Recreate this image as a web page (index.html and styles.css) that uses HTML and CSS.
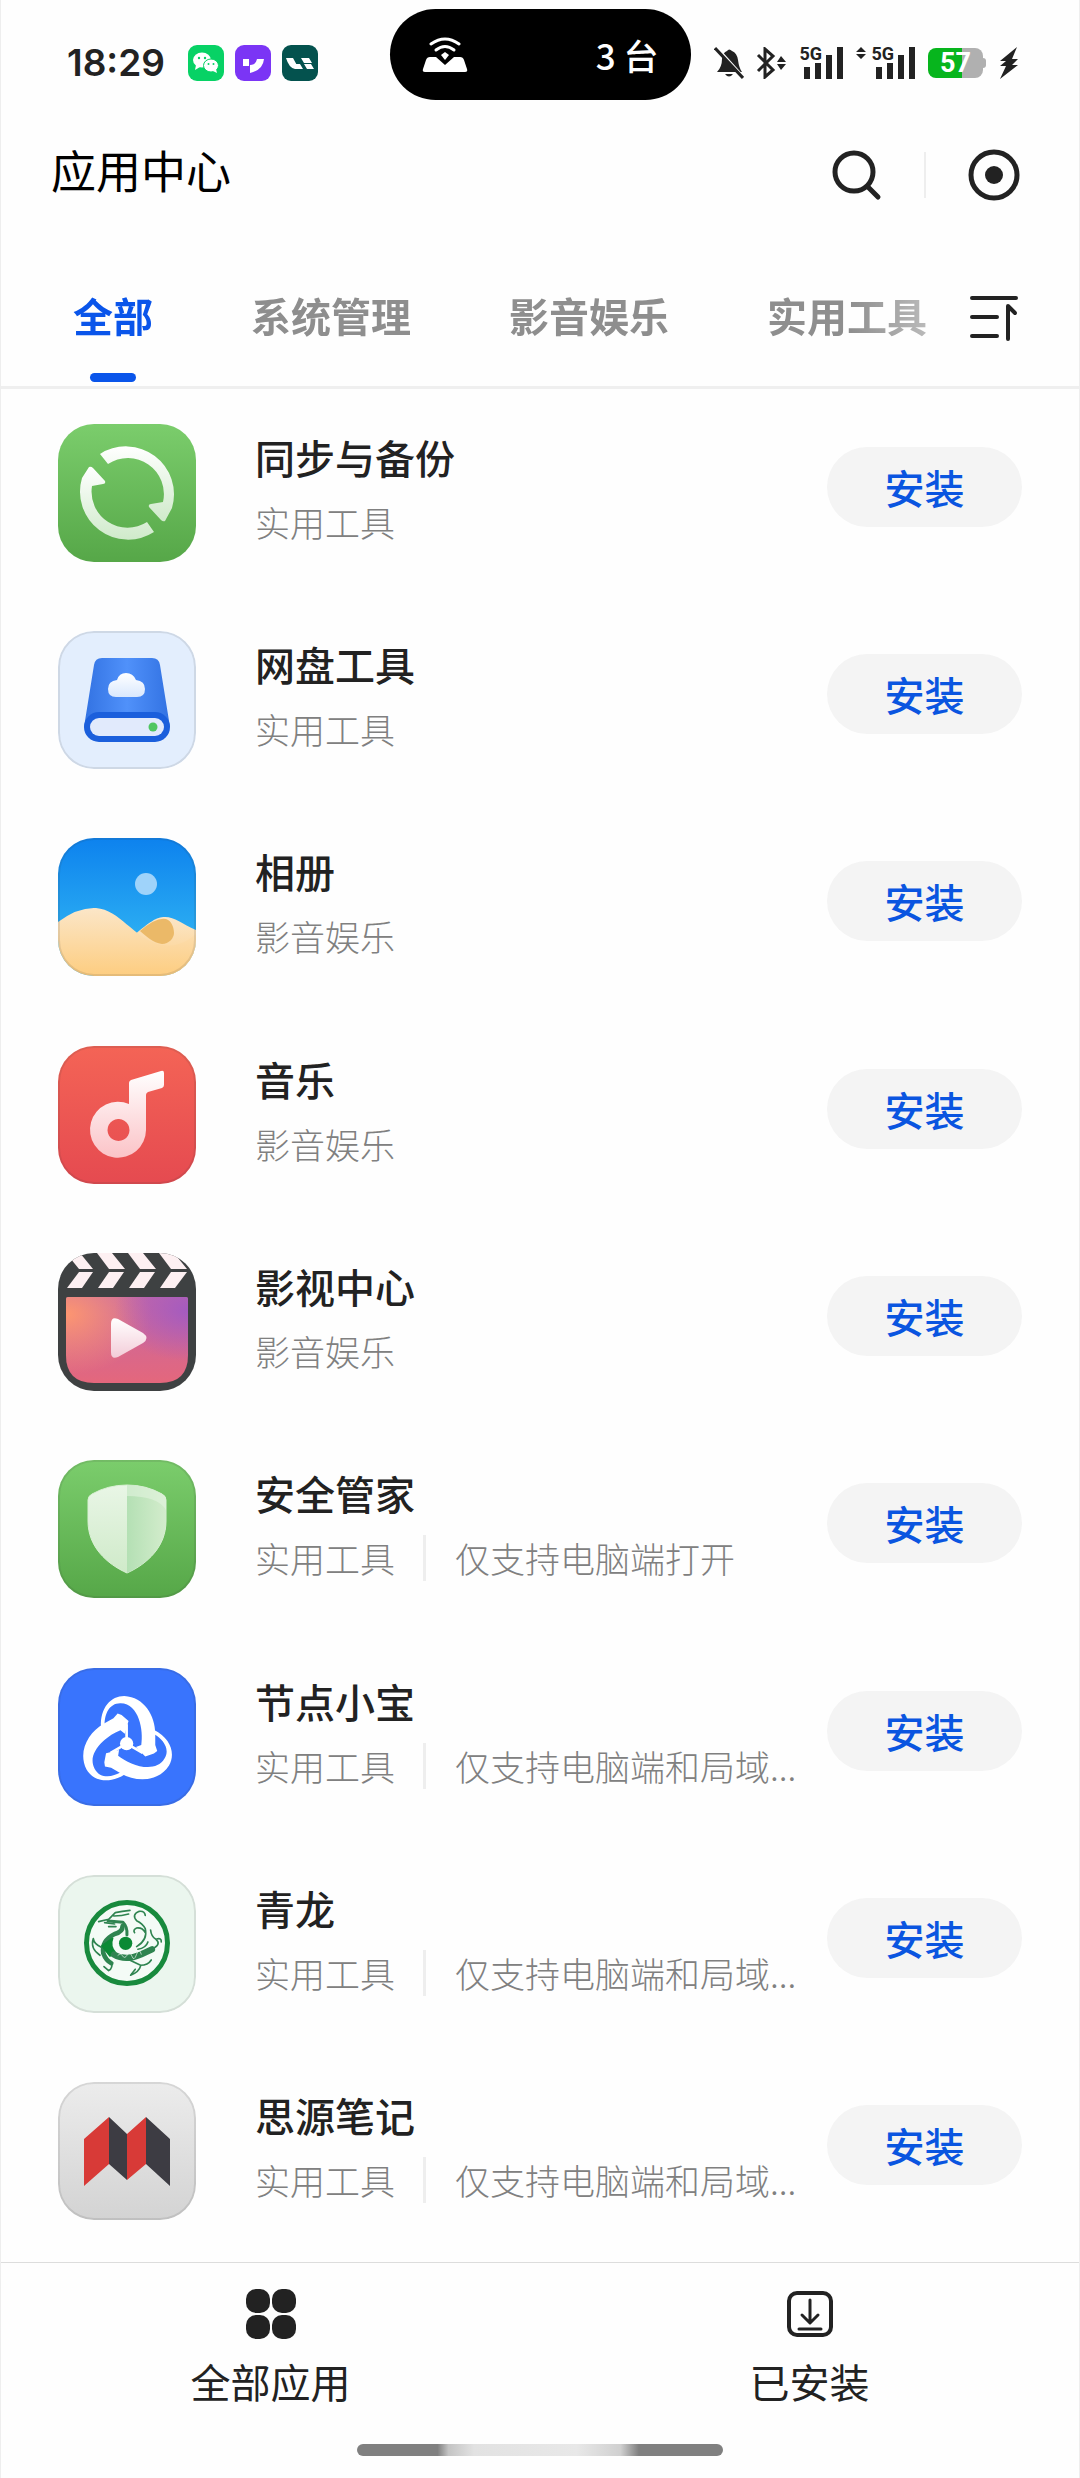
FILE: index.html
```html
<!DOCTYPE html>
<html lang="zh-CN">
<head>
    <meta charset="UTF-8">
    <meta name="viewport" content="width=device-width, initial-scale=1.0">
    <title>应用中心</title>
    <link rel="stylesheet" href="styles.css">
</head>
<body>
    <div class="status-bar">
        <div class="status-left">
            <span class="clock">18:29</span>
            <!-- WeChat -->
            <svg class="mini-icon" viewBox="0 0 36 36">
                <rect width="36" height="36" rx="9" fill="#07d265"/>
                <ellipse cx="14" cy="15" rx="9" ry="7.5" fill="#fff"/>
                <path d="M8 20l-1 5 5-3z" fill="#fff"/>
                <ellipse cx="23" cy="20.500" rx="7.500" ry="6.500" fill="#fff" stroke="#07d265"/>
                <path d="M25 26l4 2-1-4z" fill="#fff"/>
                <g fill="#07d265"><circle cx="11" cy="13" r="1.200"/><circle cx="17" cy="13" r="1.200"/><circle cx="20.500" cy="19" r="1"/><circle cx="25.500" cy="19" r="1"/></g>
            </svg>
            <svg class="mini-icon" viewBox="0 0 36 36">
                <rect width="36" height="36" rx="9" fill="#7b35f5"/>
                <path d="M8 14h6v7H8zM15 20q6 0 7-6h7q-1 11-14 14z" fill="#fff"/>
            </svg>
            <svg class="mini-icon" viewBox="0 0 36 36">
                <rect width="36" height="36" rx="9" fill="#04524e"/>
                <path d="M4 13h7l6 11h-4q-6-1-9-11zM14 19h4l3 5h-4zM19 13h8l3 5h-8zM22 19h7l3 5h-7z" fill="#fff"/>
            </svg>
        </div>
        <div class="island">
            <svg class="island-icon" viewBox="0 0 46 36">
                <path d="M8 20h6l9 8 9-8h6q3 0 4 3l3 9q1 3-2 3H3q-3 0-2-3l3-9q1-3 4-3z" fill="#fff"/>
                <g fill="none" stroke="#fff" stroke-width="3" stroke-linecap="round"><path d="M9 7q14-10 28 0"/><path d="M14 13q9-7 18 0"/></g>
                <path d="M23 15l4 3-4 5-4-5z" fill="#fff"/>
            </svg>
            <span>3 台</span>
        </div>
        <div class="status-right">
            <svg width="30" height="32" viewBox="0 0 30 32">
                <path d="M3 25q5-5 5-13 1-7 5-8 2-3 5 0 5 2 6 9 1 8 4 12z" fill="#222"/>
                <path d="M11 27h8q-4 5-8 0z" fill="#222"/>
                <path d="M3 1l27 30" stroke="#fff" stroke-width="3"/>
                <path d="M1 1l28 30" stroke="#222" stroke-width="3"/>
            </svg>
            <svg width="30" height="32" viewBox="0 0 30 32">
                <path d="M2 8l15 15-8 7V2l8 7L2 24" fill="none" stroke="#222" stroke-width="3"/>
                <path d="M25 9l5 6h-9zM25 23l5-6h-9z" fill="#222"/>
            </svg>
            <div class="signal">
                <span class="net">5G</span>
                <svg width="46" height="32" viewBox="0 0 46 32">
                    <path d="M6 20h6v12H6zM17 16h6v16h-6zM28 8h6v24h-6zM39 0h6v32h-6z" fill="#222"/>
                </svg>
            </div>
            <div class="signal">
                <svg class="traffic" width="10" height="12" viewBox="0 0 10 12">
                    <path d="M5 0l5 5H0zM5 12l5-5H0z" fill="#222"/>
                </svg>
                <span class="net">5G</span>
                <svg width="46" height="32" viewBox="0 0 46 32">
                    <path d="M6 20h6v12H6zM17 16h6v16h-6zM28 8h6v24h-6zM39 0h6v32h-6z" fill="#222"/>
                </svg>
            </div>
            <div class="battery"><span>57</span></div>
            <svg width="20" height="32" viewBox="0 0 20 32">
                <path d="M18 0L1 14h6l-6 5h6L1 32l18-14h-6l6-6h-6z" fill="#222"/>
            </svg>
        </div>
    </div>

    <header class="header">
        <h1>应用中心</h1>
        <div class="header-actions">
            <button type="button" class="icon-btn" aria-label="搜索">
                <svg width="50" height="52" viewBox="0 0 50 52" fill="none" stroke="#222" stroke-width="5" stroke-linecap="round">
                    <circle cx="22" cy="23" r="19"/>
                    <path d="M36 38l10 10"/>
                </svg>
            </button>
            <span class="divider"></span>
            <button type="button" class="icon-btn" aria-label="关闭">
                <svg width="52" height="52" viewBox="0 0 52 52">
                    <circle cx="26" cy="26" r="23" fill="none" stroke="#222" stroke-width="5"/>
                    <circle cx="26" cy="26" r="9" fill="#222"/>
                </svg>
            </button>
        </div>
    </header>

    <nav class="tabs">
        <div class="tab-strip">
            <button type="button" class="tab active">全部</button>
            <button type="button" class="tab">系统管理</button>
            <button type="button" class="tab">影音娱乐</button>
            <button type="button" class="tab">实用工具</button>
        </div>
        <button type="button" class="icon-btn sort-btn" aria-label="排序">
            <svg width="50" height="48" viewBox="0 0 50 48" fill="none" stroke="#222" stroke-width="4" stroke-linecap="round" stroke-linejoin="round">
                <path d="M3 3h44M3 22h25M3 41h25M39 44V11l7 7"/>
            </svg>
        </button>
    </nav>

    <ul class="app-list">
        <li class="app">
            <svg class="app-icon" viewBox="0 0 138 138">
                <defs>
                    <linearGradient id="green" x2="0" y2="1"><stop stop-color="#7bcd6c"/><stop offset="1" stop-color="#56a748"/></linearGradient>
                    <linearGradient id="arrow" x2="0" y2="1"><stop stop-color="#fff"/><stop offset="1" stop-color="#cfeaca"/></linearGradient>
                </defs>
                <rect width="138" height="138" fill="url(#green)"/>
                <path d="M42 30a48 48 0 0 1 72 54l-7 13q-2 1-4-1L91 83q-1-3 2-3l12-2a36 36 0 0 0-55-38z" fill="url(#arrow)"/>
                <path d="M96 108a48 48 0 0 1-72-54l7-11q2-1 4 1l12 13q1 3-2 3l-11 2a36 36 0 0 0 55 36z" fill="url(#arrow)"/>
            </svg>
            <div class="app-info">
                <h2>同步与备份</h2>
                <p class="meta"><span>实用工具</span></p>
            </div>
            <button type="button" class="install">安装</button>
        </li>
        <li class="app">
            <svg class="app-icon" viewBox="0 0 138 138">
                <defs>
                    <linearGradient id="disk"><stop stop-color="#3272e2"/><stop offset=".5" stop-color="#5091fa"/><stop offset="1" stop-color="#3272e2"/></linearGradient>
                    <linearGradient id="cloud" x2="0" y2="1"><stop stop-color="#fff"/><stop offset="1" stop-color="#d9e8fd"/></linearGradient>
                </defs>
                <rect width="138" height="138" fill="#e3eefd"/>
                <path d="M44 27h50q7 0 8 7l10 62H26l10-62q1-7 8-7z" fill="url(#disk)"/>
                <rect x="26" y="81" width="86" height="30" rx="15" fill="#1b5fdc"/>
                <rect x="32" y="87" width="74" height="18" rx="9" fill="#e1eafc"/>
                <circle cx="95" cy="96" r="4.500" fill="#4fc661"/>
                <path d="M58 66q-8 0-8-8t9-9q2-7 9-7t10 7q9 1 9 9t-8 8z" fill="url(#cloud)"/>
                <rect class="edge" x="1" y="1" width="136" height="136" rx="35"/>
            </svg>
            <div class="app-info">
                <h2>网盘工具</h2>
                <p class="meta"><span>实用工具</span></p>
            </div>
            <button type="button" class="install">安装</button>
        </li>
        <li class="app">
            <svg class="app-icon" viewBox="0 0 138 138">
                <defs>
                    <linearGradient id="sky" x2="0" y2="1"><stop stop-color="#0d82ee"/><stop offset=".7" stop-color="#2badf2"/></linearGradient>
                    <linearGradient id="sand" x2="0" y2="1"><stop stop-color="#fbe6c8"/><stop offset="1" stop-color="#fdcd80"/></linearGradient>
                </defs>
                <rect width="138" height="138" fill="url(#sky)"/>
                <circle cx="88" cy="46" r="11" fill="#9fd3fa"/>
                <path d="M76 97C92 84 98 79 107 79c10 0 17 7 31 13v46H76z" fill="url(#sand)"/>
                <path d="M0 84q20-15 38-14c24 2 37 29 62 36 20 5 30-4 38-10v42H0z" fill="url(#sand)"/>
                <path d="M82 93q16-14 26-12c6 2 8 9 8 14s-5 11-12 11c-9-1-16-8-22-13z" fill="#ebb968"/>
                <rect class="edge" x="1" y="1" width="136" height="136" rx="35"/>
            </svg>
            <div class="app-info">
                <h2>相册</h2>
                <p class="meta"><span>影音娱乐</span></p>
            </div>
            <button type="button" class="install">安装</button>
        </li>
        <li class="app">
            <svg class="app-icon" viewBox="0 0 138 138">
                <defs>
                    <linearGradient id="red" x2="0" y2="1"><stop stop-color="#f46456"/><stop offset="1" stop-color="#e54a50"/></linearGradient>
                    <linearGradient id="note" x2="0" y2="1"><stop stop-color="#fff"/><stop offset="1" stop-color="#fbc3c7"/></linearGradient>
                </defs>
                <rect width="138" height="138" fill="url(#red)"/>
                <path fill-rule="evenodd" d="M71 58V37q0-2 2-3l30-9q3-1 3 2v12q0 2-2 3l-14 4q-2 1-2 3v35A28 28 0 1 1 71 58zM60 73a11 11 0 1 0 1 0z" fill="url(#note)"/>
                <rect class="edge" x="1" y="1" width="136" height="136" rx="35"/>
            </svg>
            <div class="app-info">
                <h2>音乐</h2>
                <p class="meta"><span>影音娱乐</span></p>
            </div>
            <button type="button" class="install">安装</button>
        </li>
        <li class="app">
            <svg class="app-icon" viewBox="0 0 138 138">
                <defs>
                    <linearGradient id="screen" x2="0" y2="1"><stop stop-color="#c568a6"/><stop offset="1" stop-color="#e4677c"/></linearGradient>
                    <radialGradient id="orange" cx="0" cy=".2" r=".7"><stop stop-color="#fd9670"/><stop offset="1" stop-color="#fd9670" stop-opacity="0"/></radialGradient>
                    <radialGradient id="purple" cx="1" cy=".15" r=".6"><stop stop-color="#a45bc0"/><stop offset="1" stop-color="#a45bc0" stop-opacity="0"/></radialGradient>
                    <linearGradient id="play" x2="0" y2="1"><stop stop-color="#fff"/><stop offset="1" stop-color="#f3ccd8"/></linearGradient>
                    <path id="screen-shape" d="M10 44h118q2 0 2 2v56q0 28-28 28H36Q8 130 8 102V46q0-2 2-2z"/>
                </defs>
                <rect width="138" height="138" fill="#3e4142"/>
                <g fill="#fdf0f2">
                    <path d="M8 0h14l13 16H21zM39 0h15l13 16H51zM70 0h15l13 16H82zM101 0h15l13 16h-16z"/>
                    <path d="M21 19h14L24 35H9zM51 19h15L55 35H40zM82 19h15L86 35H71zM113 19h16l-12 16h-15z"/>
                </g>
                <use href="#screen-shape" fill="url(#screen)"/>
                <use href="#screen-shape" fill="url(#orange)"/>
                <use href="#screen-shape" fill="url(#purple)"/>
                <path d="M53 71q0-8 7-5l25 14q7 5 0 10l-25 14q-7 3-7-5z" fill="url(#play)"/>
            </svg>
            <div class="app-info">
                <h2>影视中心</h2>
                <p class="meta"><span>影音娱乐</span></p>
            </div>
            <button type="button" class="install">安装</button>
        </li>
        <li class="app">
            <svg class="app-icon" viewBox="0 0 138 138">
                <defs>
                    <linearGradient id="shield" x2="0" y2="1"><stop stop-color="#e9f6e6"/><stop offset="1" stop-color="#cfeac9"/></linearGradient>
                    <linearGradient id="shield-dark"><stop stop-color="#b4e0b4"/><stop offset="1" stop-color="#d3eccc"/></linearGradient>
                </defs>
                <rect width="138" height="138" fill="url(#green)"/>
                <path d="M69 25q19 0 35 9 4 2 4 6v21c0 26-19 43-39 52-20-9-39-26-39-52V40q0-4 4-6 16-9 35-9z" fill="url(#shield)" stroke="#d9f0d4"/>
                <path d="M69 25q19 0 35 9 4 2 4 6v21c0 26-19 43-39 52z" fill="url(#shield-dark)"/>
                <path d="M69 25q19 0 35 9 4 2 4 6v10q-8-14-39-14z" fill="#e3f4df" opacity=".6"/>
                <rect class="edge" x="1" y="1" width="136" height="136" rx="35"/>
            </svg>
            <div class="app-info">
                <h2>安全管家</h2>
                <p class="meta"><span>实用工具</span><span class="note">仅支持电脑端打开</span></p>
            </div>
            <button type="button" class="install">安装</button>
        </li>
        <li class="app">
            <svg class="app-icon" viewBox="0 0 138 138">
                <defs>
                    <path id="loop" d="M75 108C72 50 105 15 145 15c60 3 93 60 93 113v34l6 18-10 8-26 9-28-29 16-6c7-42-6-124-62-125-34-1-48 33-48 63z"/>
                </defs>
                <rect width="138" height="138" fill="#3974fd"/>
                <g transform="translate(18 23) scale(.333)" fill="#fff">
                    <use href="#loop"/>
                    <use href="#loop" transform="rotate(120 152 158)"/>
                    <use href="#loop" transform="rotate(240 152 158)"/>
                    <circle cx="152" cy="158" r="20"/>
                    <path d="M152 158V100M152 158l-48 28M152 158l48 28" stroke="#fff" stroke-width="8"/>
                </g>
                <rect class="edge" x="1" y="1" width="136" height="136" rx="35"/>
            </svg>
            <div class="app-info">
                <h2>节点小宝</h2>
                <p class="meta"><span>实用工具</span><span class="note">仅支持电脑端和局域...</span></p>
            </div>
            <button type="button" class="install">安装</button>
        </li>
        <li class="app">
            <svg class="app-icon" viewBox="0 0 138 138">
                <rect width="138" height="138" fill="#ebf6ee"/>
                <circle cx="69" cy="68" r="40.500" fill="#f4fbf6" stroke="#188a3d" stroke-width="5"/>
                <g transform="translate(20 21) scale(.333)" fill="none" stroke="#2f8450" stroke-width="5" stroke-linecap="round" stroke-linejoin="round">
                    <circle cx="143" cy="142" r="20" fill="#0b8a35" stroke="none"/>
                    <path d="M62 77l30-7 20-20q20-5 44-7M80 80l30 4M92 92h22M108 60q24 0 44-6"/>
                    <path d="M90 75l45 4q14 14 12 38" stroke-width="9"/>
                    <path d="M134 90q0 18-24 24-40 20-34 58 8 22 24 30" stroke-width="14"/>
                    <path d="M72 150l24 30 18-8q-20-20-10-45z" fill="#0b8a35" stroke="#0b8a35"/>
                    <path d="M108 176q34 20 80 0l34-16" stroke-width="19"/>
                    <path d="M120 178q8-8 14 2t14-3 14 4 14-6 14 0" stroke="#ebf6ee" stroke-width="2"/>
                    <path d="M176 152q34-20 26-54-8-16-26-24-16-18 8-28 16-2 18 12M202 110q-8-16-26-14-12 6-6 14"/>
                    <path d="M180 160q24-4 30-22M222 160q30-16 12-30-14-8-16-28M234 130q18-6 16 8"/>
                    <path d="M66 178q-30-20-20-50 2 16 24 26"/>
                    <path d="M100 200q6 16-8 24l-14-12M150 190l38 18q22 0 32-16M188 210q-4 18-30 28l14-18"/>
                </g>
                <rect class="edge" x="1" y="1" width="136" height="136" rx="35"/>
            </svg>
            <div class="app-info">
                <h2>青龙</h2>
                <p class="meta"><span>实用工具</span><span class="note">仅支持电脑端和局域...</span></p>
            </div>
            <button type="button" class="install">安装</button>
        </li>
        <li class="app">
            <svg class="app-icon" viewBox="0 0 138 138">
                <defs>
                    <linearGradient id="grey" x2="0" y2="1"><stop stop-color="#ececec"/><stop offset="1" stop-color="#d3d3d3"/></linearGradient>
                </defs>
                <rect width="138" height="138" fill="url(#grey)"/>
                <path d="M26 57l25-22v47l-25 22zM69 52l19-17v47L69 98z" fill="#d83a37"/>
                <path d="M51 35l18 17v46L51 82zM88 35l24 22v47L88 82z" fill="#3d3c43"/>
                <rect class="edge" x="1" y="1" width="136" height="136" rx="35"/>
            </svg>
            <div class="app-info">
                <h2>思源笔记</h2>
                <p class="meta"><span>实用工具</span><span class="note">仅支持电脑端和局域...</span></p>
            </div>
            <button type="button" class="install">安装</button>
        </li>
    </ul>

    <footer class="bottom">
        <nav class="bottom-nav">
            <a href="#" class="nav-item">
                <svg width="50" height="50" viewBox="0 0 50 50" fill="#222">
                    <rect width="24" height="24" rx="10"/>
                    <rect x="26" width="24" height="24" rx="10"/>
                    <rect y="26" width="24" height="24" rx="10"/>
                    <rect x="26" y="26" width="24" height="24" rx="10"/>
                </svg>
                <span>全部应用</span>
            </a>
            <a href="#" class="nav-item">
                <svg width="50" height="50" viewBox="0 0 50 50" fill="none" stroke="#222" stroke-width="4" stroke-linecap="round" stroke-linejoin="round">
                    <rect x="4" y="4" width="42" height="42" rx="8"/>
                    <path d="M25 11v22M17 26l8 8 8-8M14 40h22" stroke-width="3"/>
                </svg>
                <span>已安装</span>
            </a>
        </nav>
        <div class="home-indicator"></div>
    </footer>
</body>
</html>
```

FILE: styles.css
```css
* {
    box-sizing: border-box;
    margin: 0;
    padding: 0;
}

body {
    display: flex;
    flex-direction: column;
    min-height: 100vh;
    border-left: 1px solid #eee;
    border-right: 1px solid #eee;
    background: #fefefe;
    color: #222;
    font-family: "Noto Sans CJK SC", sans-serif;
    font-size: 40px;
}

button {
    border: none;
    background: none;
    font-family: inherit;
    cursor: pointer;
}

svg {
    display: block;
}

/* Status bar */
.status-bar {
    display: grid;
    grid-template-columns: 1fr auto 1fr;
    padding-top: 9px;
}

.status-left {
    display: flex;
    align-items: center;
    gap: 11px;
    padding: 17px 0 0 66px;
    height: 91px;
}

.clock {
    margin-right: 12px;
    font-family: Inter, sans-serif;
    font-size: 37px;
    font-weight: 600;
    line-height: 40px;
}

.mini-icon {
    width: 36px;
    height: 36px;
}

.island {
    display: flex;
    align-items: center;
    justify-content: space-between;
    width: 301px;
    height: 91px;
    padding: 0 32px;
    border-radius: 46px;
    background: #000;
    color: #fff;
    font-size: 35px;
    font-weight: 500;
}

.island-icon {
    width: 46px;
    height: 36px;
}

.status-right {
    display: flex;
    align-items: center;
    justify-content: flex-end;
    gap: 12px;
    padding: 17px 60px 0 0;
    height: 91px;
}

.signal {
    display: flex;
    position: relative;
}

/* Network label sits over the short bars */
.net {
    position: absolute;
    top: -3px;
    right: 22px;
    font-family: Roboto, sans-serif;
    font-size: 18px;
    font-weight: 700;
    line-height: 20px;
}

.traffic {
    margin-right: 4px;
}

.battery {
    display: flex;
    position: relative;
    align-items: center;
    justify-content: center;
    width: 55px;
    height: 30px;
    margin-right: 4px;
    border-radius: 8px;
    background: linear-gradient(to right, #07b51d 62%, #b0b0b0 62%);
    color: #fff;
    font-family: Roboto, sans-serif;
    font-size: 27px;
    font-weight: 700;
    line-height: 30px;
}

.battery::after {
    position: absolute;
    right: -3px;
    width: 3px;
    height: 10px;
    border-radius: 0 3px 3px 0;
    background: #b0b0b0;
    content: "";
}

/* Title row */
.header {
    display: flex;
    align-items: center;
    justify-content: space-between;
    padding: 38px 59px 24px 50px;
}

.header h1 {
    padding-bottom: 10px;
    color: #000;
    font-size: 45px;
    font-weight: 400;
    line-height: 64px;
}

.header-actions {
    display: flex;
    align-items: center;
    gap: 42px;
}

.divider {
    width: 2px;
    height: 46px;
    background: #eee;
}

/* Category tabs */
.tabs {
    display: flex;
    align-items: center;
    gap: 20px;
    padding-right: 60px;
    border-bottom: 3px solid #efefef;
}

.tab-strip {
    display: flex;
    flex: 1;
    gap: 98px;
    min-width: 0;
    padding: 49px 0 4px 72px;
    overflow: hidden;
    mask-image: linear-gradient(to right, #000 calc(100% - 100px), rgba(0, 0, 0, 0.5));
}

.tab {
    display: flex;
    flex: none;
    flex-direction: column;
    align-items: center;
    color: #8e8e8e;
    font-size: 40px;
    font-weight: 700;
    line-height: 60px;
}

.tab::after {
    content: "";
    width: 46px;
    height: 9px;
    margin-top: 28px;
    border-radius: 5px;
}

.tab.active {
    color: #0a55ea;
}

.tab.active::after {
    background: #0a55ea;
}

.sort-btn {
    margin-top: 16px;
}

/* App list */
.app-list {
    display: flex;
    flex: 1;
    flex-direction: column;
    padding-bottom: 7px;
    list-style: none;
}

.app {
    display: flex;
    flex: 1;
    align-items: center;
    padding: 0 57px;
}

.app-icon {
    flex: none;
    width: 138px;
    height: 138px;
    border-radius: 36px;
}

.edge {
    fill: none;
    stroke: rgba(60, 60, 60, 0.12);
    stroke-width: 2;
}

.app-info {
    flex: 1;
    min-width: 0;
    padding: 0 0 8px 59px;
}

.app-info h2 {
    font-size: 40px;
    font-weight: 500;
    line-height: 66px;
}

.meta {
    display: flex;
    align-items: center;
    color: #808080;
    font-size: 35px;
    font-weight: 300;
    line-height: 64px;
    white-space: nowrap;
}

.note {
    display: flex;
    align-items: center;
}

.note::before {
    content: "";
    width: 3px;
    height: 46px;
    margin: 0 29px 0 28px;
    background: #eee;
}

.install {
    flex: none;
    width: 195px;
    height: 80px;
    margin-bottom: 12px;
    border-radius: 40px;
    background: #f4f4f4;
    color: #0a55e0;
    font-size: 40px;
    font-weight: 500;
    line-height: 60px;
}

/* Bottom navigation */
.bottom {
    padding: 26px 0 22px;
    border-top: 1px solid #ddd;
}

.bottom-nav {
    display: flex;
}

.nav-item {
    display: flex;
    flex: 1;
    flex-direction: column;
    align-items: center;
    gap: 12px;
    color: #222;
    font-size: 40px;
    line-height: 60px;
    text-decoration: none;
}

.home-indicator {
    width: 34%;
    height: 12px;
    margin: 33px auto 0;
    border-radius: 6px;
    background: linear-gradient(to right, #808080 22%, #c4c4c4 25%, #e2e2e2 32%, #e8e8e8 60%, #d0d0d0 72%, #808080 77%);
}
```
